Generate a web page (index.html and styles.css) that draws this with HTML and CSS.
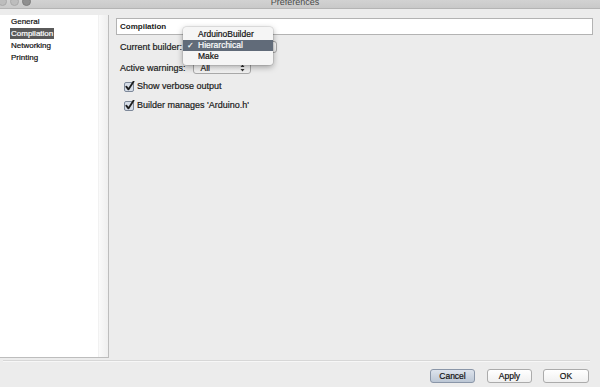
FILE: index.html
```html
<!DOCTYPE html>
<html lang="en">
<head>
    <meta charset="UTF-8">
    <meta name="viewport" content="width=device-width, initial-scale=1.0">
    <title>Preferences</title>
    <link rel="stylesheet" href="styles.css">
</head>
<body>
    <div class="titlebar">
        <div class="lights"><span></span><span></span><span class="dark"></span></div>
        <div class="title">Preferences</div>
        <div></div>
    </div>

    <div class="main">
        <div class="nav">
            <ul class="nav-list">
                <li>General</li>
                <li><span class="selected">Compilation</span></li>
                <li>Networking</li>
                <li>Printing</li>
            </ul>
            <div class="track"></div>
        </div>

        <div class="panel">
            <div class="panel-head">Compilation</div>

            <div class="row builder-row">
                <label class="label">Current builder:</label>
                <div class="combo builder-combo"></div>
                <ul class="popup">
                    <li>ArduinoBuilder</li>
                    <li class="active"><span class="tick">✓</span>Hierarchical</li>
                    <li>Make</li>
                </ul>
            </div>

            <div class="row warnings-row">
                <label class="label">Active warnings:</label>
                <div class="combo warnings-combo">
                    <span>All</span>
                    <svg class="arrows" width="5" height="8" viewBox="0 0 5 8">
                        <path d="M0.5 3 L2.5 0.5 L4.5 3 Z M0.5 5 L2.5 7.5 L4.5 5 Z" fill="#333"/>
                    </svg>
                </div>
            </div>

            <div class="row check-row first-check">
                <svg class="checkbox" width="11" height="11" viewBox="0 0 11 11">
                    <rect x="0.5" y="1.5" width="9" height="9" rx="1.5" fill="#d6dde7" stroke="#7d8899"/>
                    <path d="M2.3 5.6 L4.4 8.4 L9.6 0.6" fill="none" stroke="#1d1d1d" stroke-width="1.8" stroke-linecap="round" stroke-linejoin="round"/>
                </svg>
                <span>Show verbose output</span>
            </div>

            <div class="row check-row">
                <svg class="checkbox" width="11" height="11" viewBox="0 0 11 11">
                    <rect x="0.5" y="1.5" width="9" height="9" rx="1.5" fill="#d6dde7" stroke="#7d8899"/>
                    <path d="M2.3 5.6 L4.4 8.4 L9.6 0.6" fill="none" stroke="#1d1d1d" stroke-width="1.8" stroke-linecap="round" stroke-linejoin="round"/>
                </svg>
                <span>Builder manages 'Arduino.h'</span>
            </div>
        </div>
    </div>

    <div class="footer">
        <div class="separator"></div>
        <div class="buttons">
            <button class="btn btn-focus">Cancel</button>
            <button class="btn">Apply</button>
            <button class="btn btn-ok">OK</button>
        </div>
    </div>
</body>
</html>
```

FILE: styles.css
```css
body {
    margin: 0;
    width: 600px;
    height: 387px;
    overflow: hidden;
    background: #ececec;
    font-family: "Liberation Sans", Arial, sans-serif;
    color: #1a1a1a;
    -webkit-text-stroke: 0.2px;
}
.titlebar {
    display: grid;
    grid-template-columns: 1fr auto 1fr;
    height: 8px;
    overflow: hidden;
    background: linear-gradient(#d2d2d2, #c9c9c9);
    border-bottom: 1px solid #b4b4b4;
}
.lights {
    display: flex;
    gap: 3px;
    margin-top: -3px;
    margin-left: -2px;
}
.lights span {
    width: 7px;
    height: 7px;
    border-radius: 50%;
    background: #bdbdbd;
    border: 0.5px solid #a9a9a9;
}
.lights span.dark {
    background: #8f8f8f;
    border-color: #7d7d7d;
}
.title {
    font-size: 9px;
    line-height: 10px;
    margin-top: -3px;
    padding-right: 10px;
    color: #4a4a4a;
    -webkit-text-stroke: 0;
}

.main {
    display: flex;
    height: 349px;
}
.nav {
    display: flex;
    margin-top: 6px;
    width: 108px;
    height: 342px;
    background: #fff;
    border-right: 1px solid #bdbdbd;
    border-bottom: 1px solid #bdbdbd;
}
.nav-list {
    flex: 1;
    list-style: none;
    margin: 0;
    padding: 1px 0 0 11px;
    font-size: 8px;
    line-height: 12px;
    color: #111;
}
.selected {
    background: #5a5a5a;
    color: #fff;
    padding: 1px 1px;
    margin-left: -1px;
}
.track {
    width: 9px;
    background: linear-gradient(90deg, #fafafa, #efefef);
    border-left: 1px solid #f1f1f1;
}

.panel {
    flex: 1;
    padding: 9px 7px 0 7px;
}
.panel-head {
    height: 15px;
    line-height: 15px;
    background: #fff;
    border: 1px solid #b3b3b3;
    padding-left: 3px;
    font-size: 8px;
    font-weight: bold;
    -webkit-text-stroke: 0;
}
.row {
    display: flex;
    align-items: center;
    padding-left: 4px;
    font-size: 9px;
}
.builder-row {
    position: relative;
    height: 12px;
    margin-top: 6px;
}
.builder-row .label {
    margin-right: 3px;
}
.combo {
    box-sizing: border-box;
    height: 12px;
    background: linear-gradient(#ffffff, #f0f0f0);
    border: 1px solid #a9a9a9;
    border-radius: 3px;
    font-size: 8.5px;
    line-height: 10px;
}
.builder-combo {
    width: 92px;
}
.warnings-row {
    height: 13px;
    margin-top: 8px;
}
.warnings-row .label {
    margin-right: 7px;
}
.warnings-combo {
    display: flex;
    align-items: center;
    justify-content: space-between;
    width: 58px;
    height: 13px;
    padding: 0 5px 0 7px;
}
.arrows {
    display: block;
}

.popup {
    position: absolute;
    left: 67px;
    top: -14px;
    width: 90px;
    margin: 0;
    padding: 2px 0 3px 0;
    list-style: none;
    background: #f5f5f5;
    border-radius: 3px;
    box-shadow: 0 2px 6px rgba(0, 0, 0, 0.35), 0 0 0 0.5px rgba(0, 0, 0, 0.15);
    font-size: 8.5px;
    line-height: 11px;
}
.popup li {
    position: relative;
    padding-left: 15px;
    color: #111;
}
.popup li.active {
    background: #616b79;
    color: #fff;
}
.tick {
    position: absolute;
    left: 4px;
    font-family: "DejaVu Sans", sans-serif;
    font-size: 8px;
}

.check-row {
    height: 12px;
    padding-left: 8px;
    margin-top: 7px;
}
.first-check {
    margin-top: 6px;
}
.checkbox {
    margin-right: 2px;
}

.footer {
    padding: 2px 10px 0 3px;
}
.separator {
    border-top: 1px solid #d7d7d7;
    border-bottom: 1px solid #f7f7f7;
}
.buttons {
    display: flex;
    justify-content: flex-end;
    gap: 12px;
    padding-top: 7px;
    margin-right: 1px;
}
.btn {
    width: 45px;
    height: 14px;
    padding: 0;
    font-family: "Liberation Sans", Arial, sans-serif;
    font-size: 8.5px;
    color: #111;
    -webkit-text-stroke: 0.2px;
    background: linear-gradient(#ffffff, #f0f0f0);
    border: 1px solid #ababab;
    border-radius: 3px;
}
.btn-focus {
    background: linear-gradient(#dde3ec, #bcc7d5);
    border-color: #8a96a8;
}
.btn-ok {
    width: 46px;
    margin-left: -1px;
}
```
